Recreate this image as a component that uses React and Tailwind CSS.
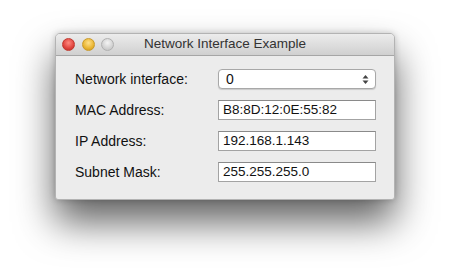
import React from 'react';

const rows = [
  { label: 'MAC Address:', value: 'B8:8D:12:0E:55:82' },
  { label: 'IP Address:', value: '192.168.1.143' },
  { label: 'Subnet Mask:', value: '255.255.255.0' },
];

function Light({ className }) {
  return <span className={`block w-[13px] h-[13px] rounded-full border ${className}`} />;
}

export default function App() {
  return (
    <div className="w-[450px] h-[276px] bg-white pt-[33px] pl-[55px] overflow-hidden" style={{ fontFamily: '"Liberation Sans", Arial, sans-serif' }}>
      <div className="w-[340px] h-[167px] flex flex-col rounded-t-[5px] rounded-b-[3px] bg-[#ececec] border border-[#b3b3b3] shadow-[0_22px_38px_rgba(0,0,0,0.62),0_0_6px_rgba(0,0,0,0.2)] overflow-hidden">
        <div className="relative h-[22px] flex items-center bg-gradient-to-b from-[#ececec] to-[#d0d0d0] border-b border-[#a6a6a6]">
          <div className="flex items-center gap-[6.5px] pl-[6px]">
            <Light className="bg-[radial-gradient(circle_at_50%_35%,#ff8a80,#e0443e_60%,#b22a25)] border-[#c0392f]" />
            <Light className="bg-[radial-gradient(circle_at_50%_35%,#ffe08a,#e9b531_60%,#c48d1a)] border-[#c99a2a]" />
            <Light className="bg-[radial-gradient(circle_at_50%_35%,#f4f4f4,#d2d2d2_60%,#bdbdbd)] border-[#b0b0b0]" />
          </div>
          <div className="absolute inset-0 flex items-center justify-center text-[13.5px] text-[#333]">
            Network Interface Example
          </div>
        </div>
        <div className="flex flex-col gap-[11px] pt-[13px] pl-[19px]">
          <div className="flex items-center h-[20px]">
            <div className="w-[143px] text-[14px] text-[#111]">Network interface:</div>
            <div className="w-[158px] h-[20px] flex items-center justify-between rounded-[4px] bg-white border border-[#a8a8a8] shadow-[0_1px_1px_rgba(0,0,0,0.15)] pl-[7px] pr-[6px] text-[14px] text-[#111]">
              <span>0</span>
              <svg width="7" height="11" viewBox="0 0 7 11">
                <path d="M0.5 4.5 L3.5 1 L6.5 4.5 Z" fill="#444" />
                <path d="M0.5 6.5 L3.5 10 L6.5 6.5 Z" fill="#444" />
              </svg>
            </div>
          </div>
          {rows.map((r) => (
            <div key={r.label} className="flex items-center h-[20px]">
              <div className="w-[143px] text-[14px] text-[#111]">{r.label}</div>
              <div className="w-[158px] h-[20px] flex items-center bg-white border border-[#a3a3a3] border-t-[#8a8a8a] pl-[4px] text-[13.5px] text-[#111]">
                {r.value}
              </div>
            </div>
          ))}
        </div>
      </div>
    </div>
  );
}
